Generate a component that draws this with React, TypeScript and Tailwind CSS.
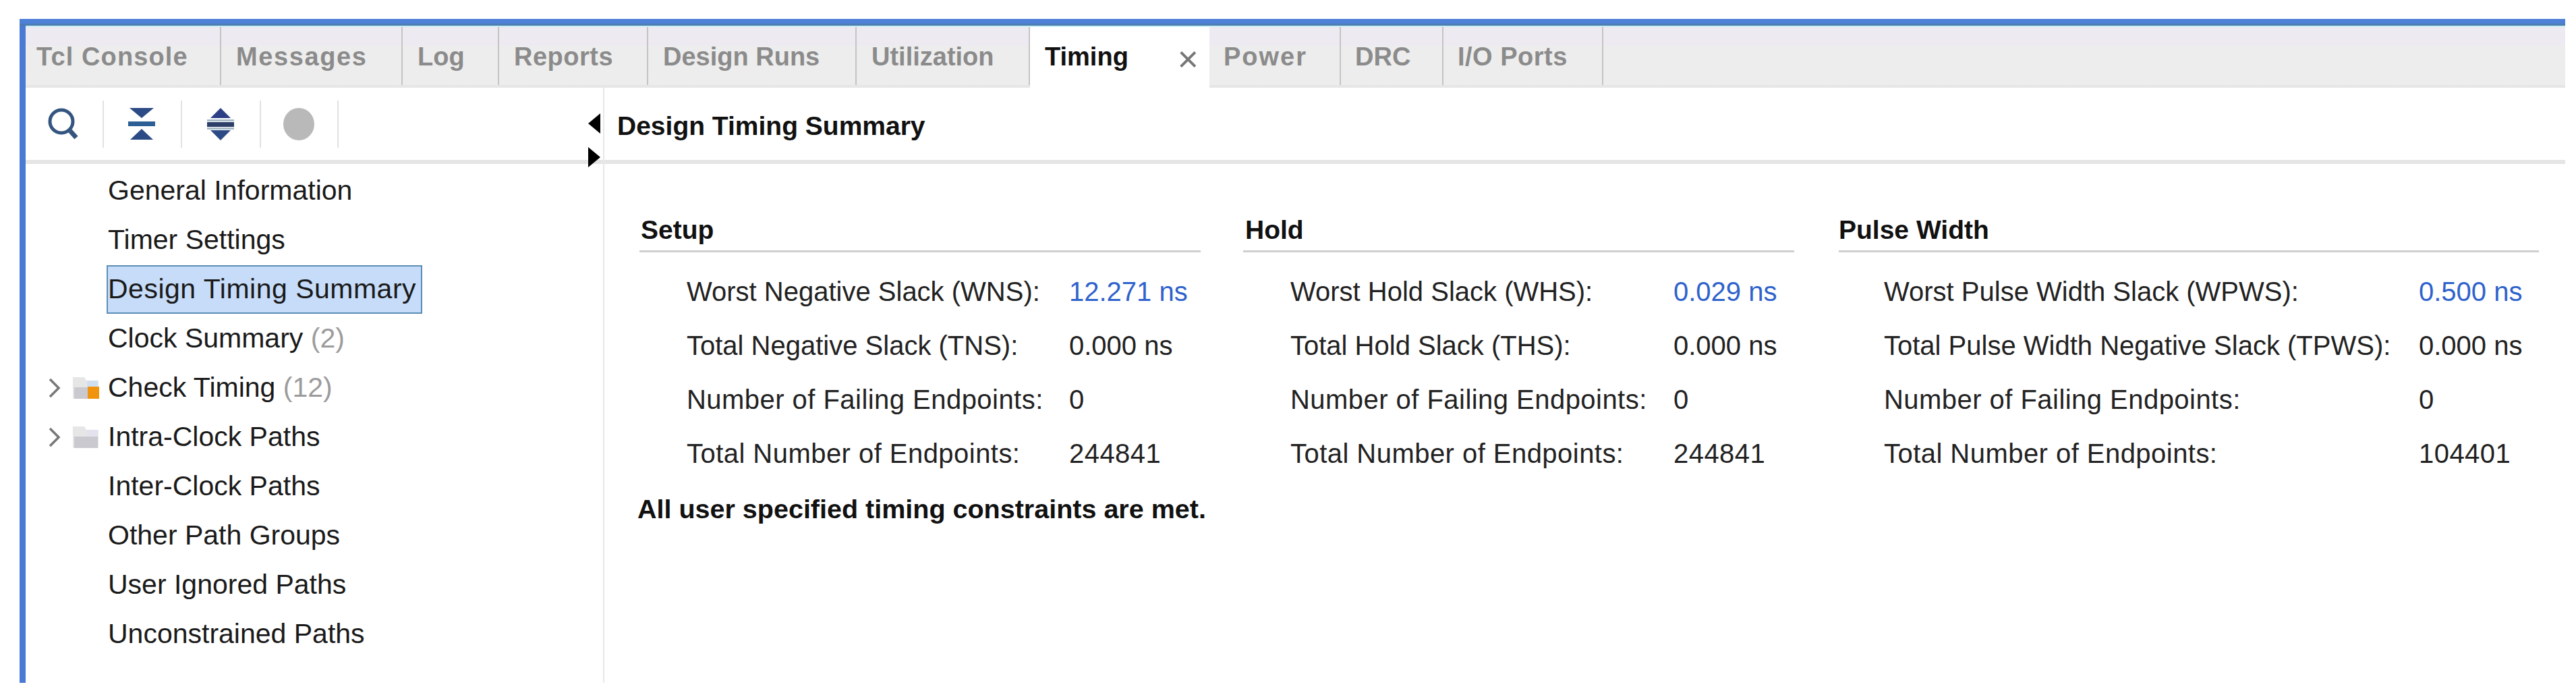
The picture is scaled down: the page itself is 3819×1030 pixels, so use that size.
const tabs = [
  { label: "Tcl Console", width: "w-[290px]", text: "pl-[16px] tracking-[1.1px]" },
  { label: "Messages", width: "w-[269px]", text: "pl-[22px] tracking-[1.6px]" },
  { label: "Log", width: "w-[143px]", text: "pl-[22px]" },
  { label: "Reports", width: "w-[221px]", text: "pl-[22px] tracking-[0.5px]" },
  { label: "Design Runs", width: "w-[309px]", text: "pl-[22px]" },
  { label: "Utilization", width: "w-[257px]", text: "pl-[22px]" },
];

const tabsAfter = [
  { label: "Power", width: "w-[195px]", text: "pl-[21px] tracking-[2px]" },
  { label: "DRC", width: "w-[152px]", text: "pl-[21px]" },
  { label: "I/O Ports", width: "w-[237px]", text: "pl-[21px] tracking-[0.5px]" },
];

const treeRows = [
  { label: "General Information" },
  { label: "Timer Settings" },
  { label: "Design Timing Summary", selected: true },
  { label: "Clock Summary", count: "(2)" },
  { label: "Check Timing", count: "(12)", folder: "warning" },
  { label: "Intra-Clock Paths", folder: "plain" },
  { label: "Inter-Clock Paths" },
  { label: "Other Path Groups" },
  { label: "User Ignored Paths" },
  { label: "Unconstrained Paths" },
];

const sections = [
  {
    title: "Setup",
    width: "w-[832px]",
    gap: "",
    headPad: "pl-[2px]",
    rowPad: "pl-[70px]",
    labelWidth: "w-[567px]",
    worst: ["Worst Negative Slack (WNS):", "12.271 ns"],
    total: ["Total Negative Slack (TNS):", "0.000 ns"],
    endpoints: "244841",
  },
  {
    title: "Hold",
    width: "w-[817px]",
    gap: "ml-[63px]",
    headPad: "pl-[3px]",
    rowPad: "pl-[70px]",
    labelWidth: "w-[568px]",
    worst: ["Worst Hold Slack (WHS):", "0.029 ns"],
    total: ["Total Hold Slack (THS):", "0.000 ns"],
    endpoints: "244841",
  },
  {
    title: "Pulse Width",
    width: "w-[1038px]",
    gap: "ml-[66px]",
    headPad: "pl-0",
    rowPad: "pl-[67px]",
    labelWidth: "w-[793px]",
    worst: ["Worst Pulse Width Slack (WPWS):", "0.500 ns"],
    total: ["Total Pulse Width Negative Slack (TPWS):", "0.000 ns"],
    endpoints: "104401",
  },
];

function Folder({ warning }: { warning?: boolean }) {
  return (
    <svg width="40" height="34" viewBox="0 0 40 34" className="shrink-0">
      <path d="M1 1h17l3 5h18v27H1z" fill="#e6e6e6" />
      <path d="M3 16h35v17H3z" fill="#c9c9cf" />
      <path d="M22 6h16v9H22z" fill={warning ? "#cfdff0" : "#e3e3f0"} />
      {warning && <rect x="23" y="15" width="17" height="18" fill="#f0940f" />}
    </svg>
  );
}

function Chevron() {
  return (
    <svg width="18" height="30" viewBox="0 0 18 30" className="shrink-0">
      <path d="M2 2l13 13L2 28" fill="none" stroke="#777" strokeWidth="3.5" />
    </svg>
  );
}

function ToolDivider({ className }: { className: string }) {
  return <div className={`w-[2px] h-[70px] bg-[#e2e2e2] shrink-0 ${className}`} />;
}

function SummaryRow({ label, value, labelWidth, link, wide }: { label: string; value: string; labelWidth: string; link?: boolean; wide?: boolean }) {
  return (
    <div className={`h-[80px] flex items-center whitespace-nowrap ${wide ? "tracking-[0.46px]" : ""}`}>
      <div className={`${labelWidth} shrink-0 text-[#222]`}>{label}</div>
      <div className={link ? "text-[#2f62cc]" : "text-[#222]"}>{value}</div>
    </div>
  );
}

export default function App() {
  return (
    <div className="w-[3819px] h-[1030px] bg-white overflow-hidden pt-[28px] pl-[29px] pr-[16px] font-['Liberation_Sans',Arial,sans-serif] text-[40px] text-[#1a1a1a]">
      <div className="h-[984px] flex flex-col">
        <div className="h-[10px] shrink-0 bg-gradient-to-b from-[#4f80d8] from-60% to-[#4a7a9e]" />
        <div className="flex-1 min-h-0 flex flex-col border-l-[9px] border-[#4a7ad3]">
          {/* Tabs */}
          <div className="h-[92px] flex shrink-0 border-t-2 border-[#c4eff8] bg-gradient-to-b from-[#eeeaf1] from-30% to-[#ededed] to-35% border-b-[4px] border-b-[#e6e6e6] text-[38px] font-bold text-[#8b8b8b]">
            {tabs.map((tab) => (
              <div key={tab.label} className={`${tab.width} ${tab.text} shrink-0 pt-[2px] flex items-center border-r-2 border-[#c4c4c4]`}>
                {tab.label}
              </div>
            ))}
            <div className="w-[266px] shrink-0 -mb-[4px] pl-[22px] pr-[16px] bg-white flex items-center justify-between text-[#111] pb-[2px]">
              Timing
              <span className="font-normal text-[#777] text-[54px] leading-none mt-[6px]">×</span>
            </div>
            {tabsAfter.map((tab) => (
              <div key={tab.label} className={`${tab.width} ${tab.text} shrink-0 pt-[2px] flex items-center border-r-2 border-[#c4c4c4]`}>
                {tab.label}
              </div>
            ))}
          </div>

          <div className="flex-1 flex min-h-0">
            {/* Tree */}
            <div className="relative w-[858px] shrink-0 border-r-2 border-[#e8e8e8]">
              <div className="h-[113px] flex items-center pl-[33px] border-b-[6px] border-[#e5e5e5]">
                <svg width="46" height="48" viewBox="0 0 46 48" className="shrink-0">
                  <circle cx="20" cy="20" r="17" fill="none" stroke="#34557f" strokeWidth="5" />
                  <path d="M33 34l9 10" stroke="#34557f" strokeWidth="7" />
                </svg>
                <ToolDivider className="ml-[35px] mr-[36px]" />
                <svg width="40" height="48" viewBox="0 0 40 48" className="shrink-0">
                  <path d="M2 0h36L20 15z" fill="#2c4a86" />
                  <rect x="0" y="20" width="40" height="7" fill="#2c5f96" />
                  <path d="M3 47h34L20 31z" fill="#2c4a86" />
                </svg>
                <ToolDivider className="ml-[38px] mr-[37px]" />
                <svg width="40" height="48" viewBox="0 0 40 48" className="shrink-0">
                  <path d="M5 15L20 0l15 15z" fill="#2c3f86" />
                  <rect x="0" y="17" width="40" height="3" fill="#a8bcc8" />
                  <rect x="0" y="21" width="40" height="7" fill="#2c3f66" />
                  <rect x="0" y="29" width="40" height="3" fill="#a8bcc8" />
                  <path d="M5 33h30L20 48z" fill="#2c4a86" />
                </svg>
                <ToolDivider className="ml-[38px] mr-[33px]" />
                <svg width="46" height="48" viewBox="0 0 46 48" className="shrink-0">
                  <ellipse cx="23" cy="24" rx="23" ry="24" fill="#b9b9b9" />
                </svg>
                <ToolDivider className="ml-[34px]" />
              </div>

              <div className="pt-[3px] text-[41px]">
                {treeRows.map((row) => (
                  <div key={row.label} className="h-[73px] flex items-center">
                    <div className="w-[122px] shrink-0 pl-[34px] pr-[13px] flex items-center justify-between">
                      {row.folder && (
                        <>
                          <Chevron />
                          <Folder warning={row.folder === "warning"} />
                        </>
                      )}
                    </div>
                    {row.selected ? (
                      <div className="w-[468px] h-[72px] -ml-[2px] pl-[0px] flex items-center bg-[#c6dcf9] border-2 border-[#5c8db6] overflow-hidden whitespace-nowrap tracking-[0.5px]">
                        {row.label}
                      </div>
                    ) : (
                      <div className="whitespace-nowrap">
                        {row.label}
                        {row.count && <span className="text-[#9b9b9b]"> {row.count}</span>}
                      </div>
                    )}
                  </div>
                ))}
              </div>

              {/* Splitter arrows */}
              <div className="absolute right-[4px] top-[38px] w-0 h-0 border-y-[15px] border-y-transparent border-r-[18px] border-r-black" />
              <div className="absolute right-[4px] top-[88px] w-0 h-0 border-y-[15px] border-y-transparent border-l-[18px] border-l-black" />
            </div>

            {/* Summary */}
            <div className="flex-1 min-w-0">
              <div className="h-[113px] flex items-center pl-[19px] pt-[7px] border-b-[6px] border-[#e5e5e5] font-bold text-[39px] text-[#111]">
                Design Timing Summary
              </div>
              <div className="pl-[52px] pt-[78px]">
                <div className="flex">
                  {sections.map((section) => (
                    <div key={section.title} className={`${section.width} ${section.gap} shrink-0`}>
                      <div className={`h-[53px] flex items-center ${section.headPad} pb-[10px] font-bold text-[39px] text-[#111] border-b-[3px] border-[#cfcfcf]`}>
                        {section.title}
                      </div>
                      <div className={`pt-[18px] ${section.rowPad}`}>
                        <SummaryRow label={section.worst[0]} value={section.worst[1]} labelWidth={section.labelWidth} link />
                        <SummaryRow label={section.total[0]} value={section.total[1]} labelWidth={section.labelWidth} />
                        <SummaryRow label="Number of Failing Endpoints:" value="0" labelWidth={section.labelWidth} wide />
                        <SummaryRow label="Total Number of Endpoints:" value={section.endpoints} labelWidth={section.labelWidth} wide />
                      </div>
                    </div>
                  ))}
                </div>
                <div className="font-bold text-[39.5px] text-[#111] -ml-[3px] mt-[13px]">
                  All user specified timing constraints are met.
                </div>
              </div>
            </div>
          </div>
        </div>
      </div>
    </div>
  );
}
